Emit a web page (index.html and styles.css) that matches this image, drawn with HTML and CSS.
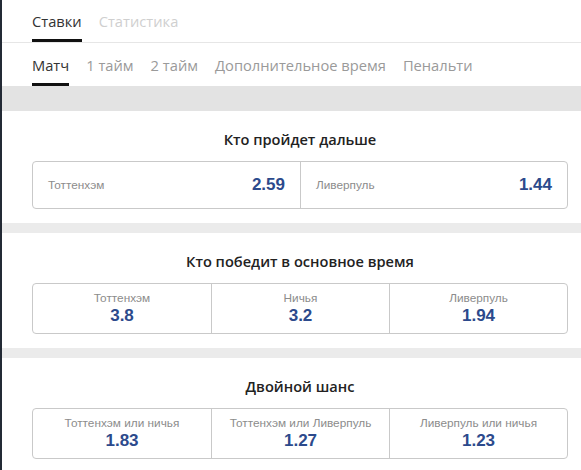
FILE: index.html
```html
<!DOCTYPE html>
<html lang="ru">
<head>
<meta charset="utf-8">
<link rel="stylesheet" href="styles.css">
</head>
<body>
<div class="page">
  <nav class="tabs tabs-main">
    <span class="tab active">Ставки</span>
    <span class="tab muted">Статистика</span>
  </nav>
  <nav class="tabs tabs-sub">
    <span class="tab active">Матч</span>
    <span class="tab">1 тайм</span>
    <span class="tab">2 тайм</span>
    <span class="tab">Дополнительное время</span>
    <span class="tab">Пенальти</span>
  </nav>

  <div class="band band-first"></div>
  <section class="market">
    <h2 class="market-title">Кто пройдет дальше</h2>
    <div class="odds-box odds-inline">
      <div class="cell"><span class="label">Тоттенхэм</span><span class="odd">2.59</span></div>
      <div class="cell"><span class="label">Ливерпуль</span><span class="odd">1.44</span></div>
    </div>
  </section>

  <div class="band"></div>
  <section class="market">
    <h2 class="market-title">Кто победит в основное время</h2>
    <div class="odds-box odds-stacked">
      <div class="cell"><span class="label">Тоттенхэм</span><span class="odd">3.8</span></div>
      <div class="cell"><span class="label">Ничья</span><span class="odd">3.2</span></div>
      <div class="cell"><span class="label">Ливерпуль</span><span class="odd">1.94</span></div>
    </div>
  </section>

  <div class="band"></div>
  <section class="market">
    <h2 class="market-title">Двойной шанс</h2>
    <div class="odds-box odds-stacked">
      <div class="cell"><span class="label">Тоттенхэм или ничья</span><span class="odd">1.83</span></div>
      <div class="cell"><span class="label">Тоттенхэм или Ливерпуль</span><span class="odd">1.27</span></div>
      <div class="cell"><span class="label">Ливерпуль или ничья</span><span class="odd">1.23</span></div>
    </div>
  </section>
</div>
</body>
</html>
```
FILE: styles.css
```css
html, body {
  margin: 0;
  padding: 0;
  background: #ffffff;
}
body {
  font-family: "Open Sans", "Noto Sans", sans-serif;
  color: #333;
}
.page {
  border-left: 2px solid #232a35;
  min-height: 470px;
  box-sizing: border-box;
}
.tabs {
  display: flex;
  gap: 17px;
  padding: 0 30px;
  font-size: 14.7px;
  line-height: 22px;
}
.tabs-main {
  border-bottom: 1px solid #e6e6e6;
}
.tab {
  color: #9a9a9a;
  padding-top: 10px;
  padding-bottom: 7px;
  border-bottom: 3px solid transparent;
}
.tabs-sub .tab {
  padding-top: 11px;
}
.tab.active {
  color: #333;
  border-bottom-color: #111;
}
.tab.muted {
  color: #cfcfcf;
}
.band {
  height: 10px;
  background: #ebebeb;
}
.band-first {
  height: 25px;
  background: #e3e3e3;
}
.market {
  padding: 18px 13px 14px 30px;
}
.market-title {
  margin: 0 0 12px;
  text-align: center;
  font-size: 14.6px;
  line-height: 20px;
  font-weight: 600;
  color: #222;
}
.odds-box {
  display: grid;
  border: 1px solid #c9c9c9;
  border-radius: 4px;
  font-family: "Liberation Sans", Arial, sans-serif;
}
.odds-inline {
  grid-template-columns: 1fr 1fr;
  height: 48px;
  box-sizing: border-box;
}
.odds-stacked {
  grid-template-columns: 1fr 1fr 1fr;
}
.cell + .cell {
  border-left: 1px solid #c9c9c9;
}
.label {
  font-size: 11.8px;
  color: #8c8c8c;
}
.odd {
  font-size: 17px;
  font-weight: bold;
  color: #2c4a8c;
}
.odds-inline .cell {
  display: flex;
  align-items: center;
  justify-content: space-between;
  padding: 0 15px;
}
.odds-stacked .cell {
  display: flex;
  flex-direction: column;
  align-items: center;
  padding: 6px 8px 7px;
}
.odds-stacked .label {
  line-height: 16px;
}
.odds-stacked .odd {
  line-height: 20px;
}
```
